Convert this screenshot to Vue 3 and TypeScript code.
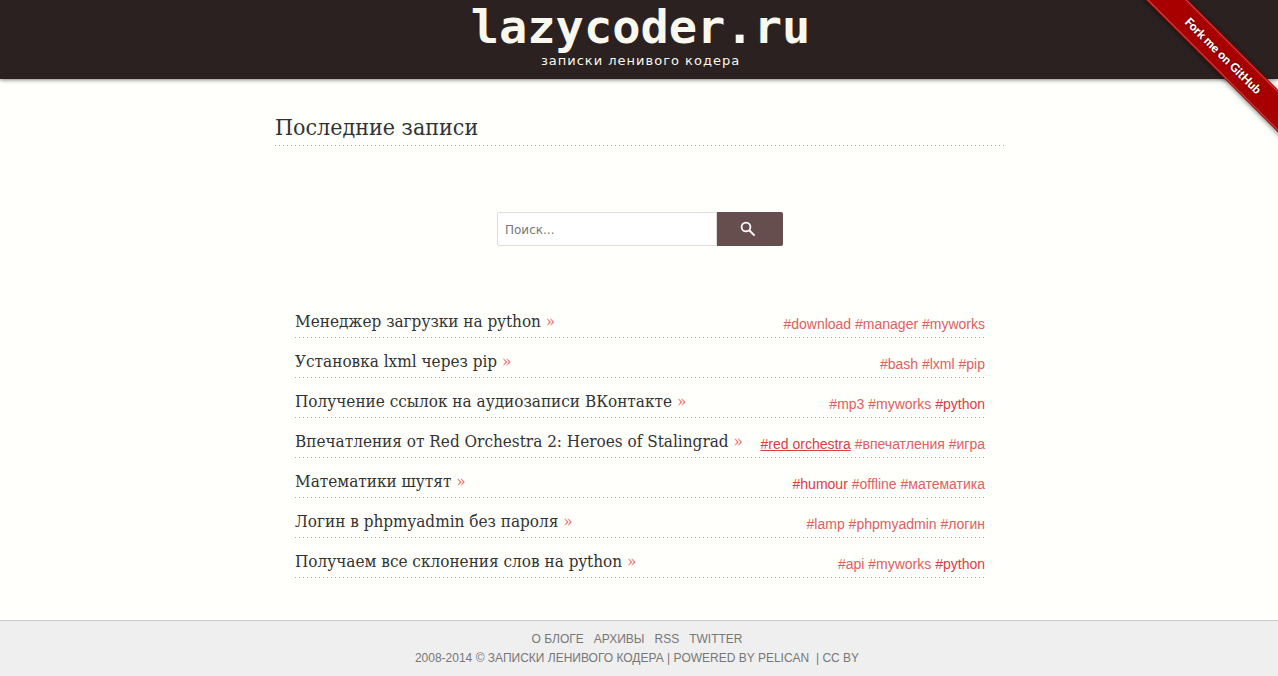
<script setup lang="ts">
interface Tag {
  name: string
  popular?: boolean
  underlined?: boolean
}

interface Post {
  title: string
  tags: Tag[]
}

const posts: Post[] = [
  { title: 'Менеджер загрузки на python', tags: [{ name: 'download' }, { name: 'manager' }, { name: 'myworks' }] },
  { title: 'Установка lxml через pip', tags: [{ name: 'bash' }, { name: 'lxml' }, { name: 'pip' }] },
  { title: 'Получение ссылок на аудиозаписи ВКонтакте', tags: [{ name: 'mp3' }, { name: 'myworks' }, { name: 'python', popular: true }] },
  {
    title: 'Впечатления от Red Orchestra 2: Heroes of Stalingrad',
    tags: [{ name: 'red orchestra', popular: true, underlined: true }, { name: 'впечатления' }, { name: 'игра' }],
  },
  { title: 'Математики шутят', tags: [{ name: 'humour', popular: true }, { name: 'offline' }, { name: 'математика' }] },
  { title: 'Логин в phpmyadmin без пароля', tags: [{ name: 'lamp' }, { name: 'phpmyadmin' }, { name: 'логин' }] },
  { title: 'Получаем все склонения слов на python', tags: [{ name: 'api' }, { name: 'myworks' }, { name: 'python', popular: true }] },
]

const links: string[] = ['О блоге', 'Архивы', 'RSS', 'Twitter']
</script>

<template>
  <div class="page">
    <header class="header">
      <a class="logo" href="#">lazycoder.ru</a>
      <p class="tagline">записки ленивого кодера</p>
    </header>

    <div class="ribbon-box">
      <a class="ribbon" href="#"><span class="ribbon-text">Fork me on GitHub</span></a>
    </div>

    <main class="main">
      <h1 class="heading">Последние записи</h1>

      <form class="search" role="search" @submit.prevent>
        <input class="search-input" type="text" placeholder="Поиск..." aria-label="Поиск" />
        <button class="search-button" type="submit" aria-label="Найти">
          <svg width="16" height="16" viewBox="0 0 16 16" fill="none" stroke="#fff" aria-hidden="true">
            <circle cx="6" cy="6" r="4.4" stroke-width="1.8" />
            <path d="M9.2 9.2L14.6 14.6" stroke-width="2" />
          </svg>
        </button>
      </form>

      <ul class="posts">
        <li v-for="post in posts" :key="post.title" class="post">
          <a class="post-title" href="#">{{ post.title }} <span class="arrow">»</span></a>
          <span class="tags">
            <template v-for="tag in post.tags" :key="tag.name">
              <a class="tag" :class="{ popular: tag.popular, underlined: tag.underlined }" href="#">#{{ tag.name }}</a>{{ ' ' }}
            </template>
          </span>
        </li>
      </ul>
    </main>

    <footer class="footer">
      <nav class="footer-nav">
        <a v-for="link in links" :key="link" href="#">{{ link }}</a>
      </nav>
      <p class="copyright">2008-2014 © Записки ленивого кодера | Powered by <a href="#">Pelican</a>&nbsp; | <a href="#">CC BY</a></p>
    </footer>
  </div>
</template>

<style>
body {
  margin: 0;
  background: #fffffc;
}
</style>

<style scoped>
.page {
  display: flex;
  flex-direction: column;
  min-height: 100vh;
  position: relative;
  background: #fffffc;
  color: #333;
  font-family: "Liberation Sans", sans-serif;
}

a {
  color: inherit;
  text-decoration: none;
}

.header {
  display: flex;
  flex-direction: column;
  align-items: center;
  padding: 0 0 10px 3px;
  background: #2a2120;
  box-shadow: 0 1px 4px rgba(0, 0, 0, 0.5);
  color: #f8f8ee;
}

.logo {
  font: bold 47px/53px "DejaVu Sans Mono", monospace;
}

.tagline {
  margin: 0;
  font: 13px/16px "DejaVu Sans", sans-serif;
  letter-spacing: 1px;
}

.ribbon-box {
  position: absolute;
  top: 0;
  right: 0;
  width: 150px;
  height: 150px;
  overflow: hidden;
  pointer-events: none;
}

.ribbon {
  position: absolute;
  top: 41px;
  right: -55px;
  box-sizing: border-box;
  width: 220px;
  padding: 1px 0;
  background: #a80000;
  box-shadow: 0 1px 5px rgba(0, 0, 0, 0.5);
  color: #fff;
  font: 900 12px/26px Lato, sans-serif;
  text-align: center;
  text-shadow: 0 0 3px rgba(0, 0, 0, 0.6);
  transform: rotate(45deg);
  pointer-events: auto;
}

.ribbon-text {
  display: block;
  border: 1px solid #c85050;
  border-width: 1px 0;
}

.main {
  box-sizing: border-box;
  width: 100%;
  max-width: 732px;
  margin: 0 auto;
  padding: 33px 0 42px 2px;
}

.heading,
.post {
  background: repeating-linear-gradient(90deg, #aaa 0 1px, transparent 1px 4px) left bottom / 100% 1px no-repeat;
}

.heading {
  margin: 0;
  padding-bottom: 4px;
  font: 23px/30px "DejaVu Serif Condensed", "DejaVu Serif", serif;
}

.search {
  display: flex;
  justify-content: center;
  margin: 66px 0 58px;
}

.search-input {
  box-sizing: border-box;
  width: 220px;
  height: 34px;
  padding: 1px 7px 0;
  border: 1px solid #ddd;
  border-radius: 2px 0 0 2px;
  background: #fff;
  color: #333;
  font: 12px "DejaVu Sans", sans-serif;
}

.search-input::placeholder {
  color: #777;
}

.search-button {
  display: flex;
  align-items: center;
  justify-content: center;
  width: 66px;
  height: 34px;
  padding: 0 4px 0 0;
  border: 0;
  border-radius: 0 2px 2px 0;
  background: #674e4e;
}

.posts {
  margin: 0 20px;
  padding: 0;
  list-style: none;
}

.post {
  display: flex;
  align-items: flex-end;
  justify-content: space-between;
  box-sizing: border-box;
  min-height: 40px;
  padding: 5px 0 4px;
}

.post:first-child {
  min-height: 34px;
}

.post-title {
  font: 17px/25px "DejaVu Serif Condensed", "DejaVu Serif", serif;
}

.arrow {
  color: #ea6b6b;
}

.tags {
  font-size: 14px;
  line-height: 20px;
  color: #e06060;
}

.popular {
  color: #dc3c46;
}

.underlined {
  text-decoration: underline;
}

.footer {
  margin-top: auto;
  padding: 8px 4px 8px 0;
  border-top: 1px solid #ccc;
  background: #efefef;
  color: #777;
  font-size: 12px;
  line-height: 19px;
  text-align: center;
  text-transform: uppercase;
}

.footer-nav {
  display: flex;
  justify-content: center;
  gap: 10px;
  line-height: 20px;
}

.copyright {
  margin: 0;
}
</style>
